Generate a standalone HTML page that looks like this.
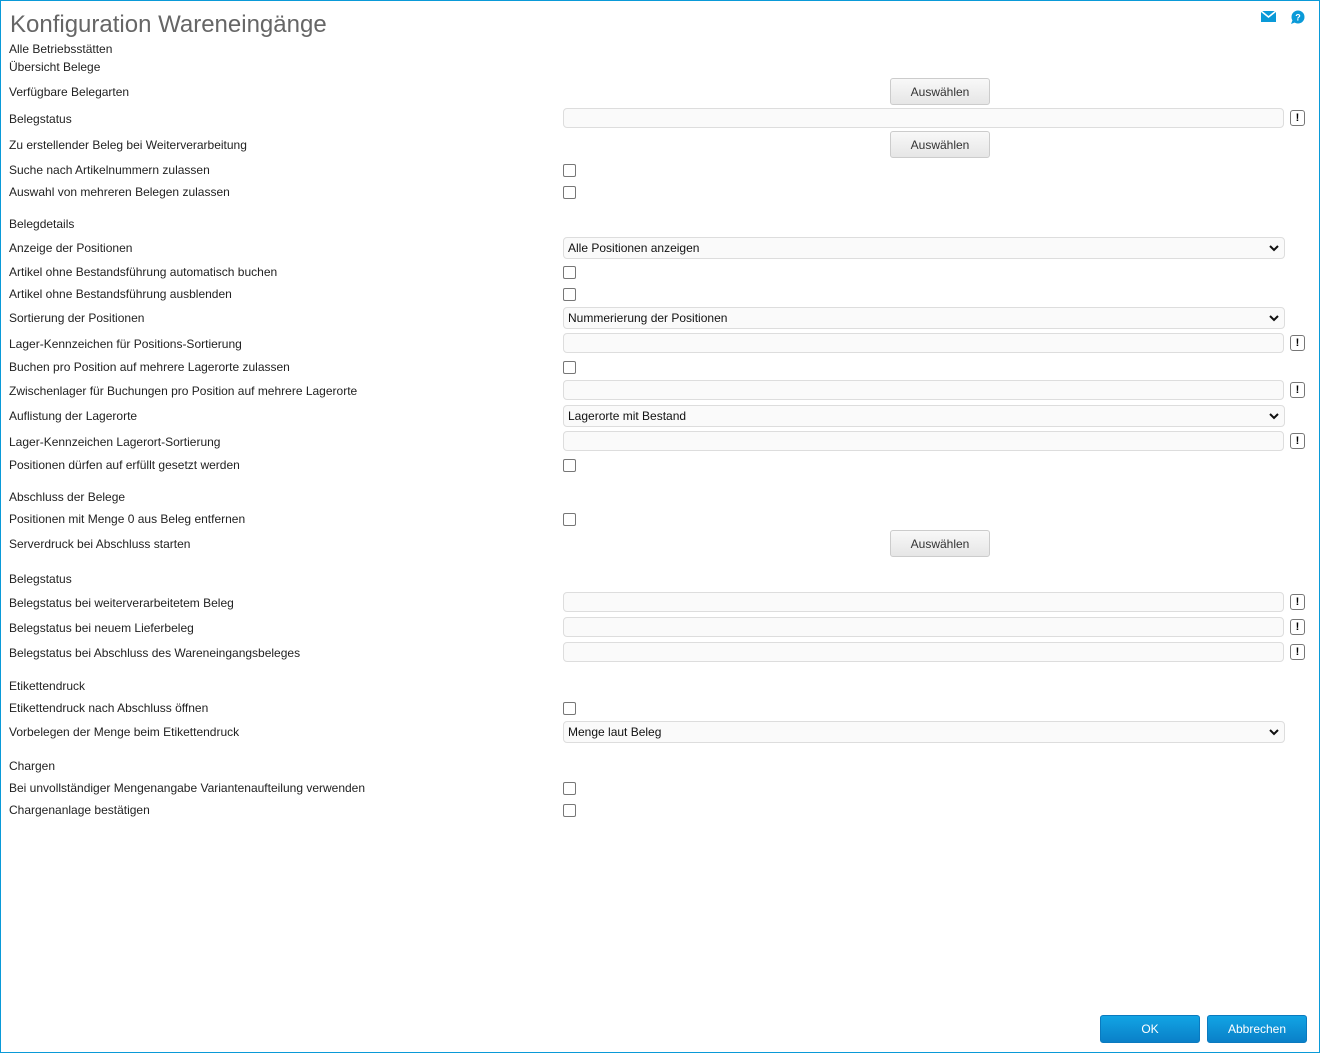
<!DOCTYPE html>
<html><head><meta charset="utf-8"><style>
*{box-sizing:border-box;margin:0;padding:0}
html,body{width:1320px;height:1053px;overflow:hidden;background:#fff}
body{font-family:"Liberation Sans",Arial,sans-serif;font-size:12px;color:#222;position:relative}
#frame{position:absolute;left:0;top:0;width:1320px;height:1053px;border:1px solid #0a9ad8}
.l{position:absolute;left:9px;line-height:14px;white-space:nowrap;margin-top:1px}
h1{position:absolute;left:10px;top:10px;font-size:24px;font-weight:normal;color:#666;line-height:30px}
.in{position:absolute;left:563px;width:721px;height:20px;border:1px solid #ddd;border-radius:4px;background:#fafafa}
.ex{position:absolute;left:1290px;width:15px;height:16px;border:1px solid #777;border-radius:3px;background:#fff;font-weight:bold;font-size:11px;text-align:center;line-height:14px;color:#000}
.sel{position:absolute;left:563px;width:722px;height:22px;border:1px solid #ddd;border-radius:4px;background:#fafafa;padding-left:4px;line-height:20px;color:#111}
.sel svg{position:absolute;right:5px;top:6px}
.cb{position:absolute;left:563px;width:13px;height:13px;border:1px solid #777;border-radius:2px;background:#fff}
.bt{position:absolute;left:890px;width:100px;height:27px;border:1px solid #ccc;border-radius:3px;background:linear-gradient(#f8f8f8,#e6e6e6);text-align:center;line-height:26px;color:#333}
.pb{position:absolute;top:1015px;width:100px;height:28px;border-radius:3px;background:linear-gradient(#12a4e4,#0a80c8);border:1px solid #0a7abf;color:#fff;text-align:center;line-height:26px}
</style></head><body>
<div id="frame"></div>
<h1>Konfiguration Wareneingänge</h1>
<svg style="position:absolute;left:1261px;top:11px" width="15" height="11" viewBox="0 0 15 11"><rect width="15" height="11" fill="#0a9ad8"/><path d="M0 0 L7.5 6 L15 0" fill="none" stroke="#fff" stroke-width="1.6"/></svg>
<svg style="position:absolute;left:1290px;top:10px" width="15" height="14" viewBox="0 0 15 14"><circle cx="8" cy="7" r="6.5" fill="#0a9ad8"/><path d="M1 14 L3 9 L6 12Z" fill="#0a9ad8"/><text x="8" y="10.5" font-size="9" font-weight="bold" fill="#fff" text-anchor="middle" font-family="Liberation Sans">?</text></svg>

<div class="l" style="top:41px">Alle Betriebsstätten</div>
<div class="l" style="top:59px">Übersicht Belege</div>
<div class="l" style="top:84px">Verfügbare Belegarten</div>
<div class="bt" style="top:78px">Auswählen</div>
<div class="l" style="top:111px">Belegstatus</div>
<div class="in" style="top:108px"></div><div class="ex" style="top:110px">!</div>
<div class="l" style="top:137px">Zu erstellender Beleg bei Weiterverarbeitung</div>
<div class="bt" style="top:131px">Auswählen</div>
<div class="l" style="top:162px">Suche nach Artikelnummern zulassen</div><div class="cb" style="top:164px"></div>
<div class="l" style="top:184px">Auswahl von mehreren Belegen zulassen</div><div class="cb" style="top:186px"></div>

<div class="l" style="top:216px">Belegdetails</div>
<div class="l" style="top:240px">Anzeige der Positionen</div>
<div class="sel" style="top:237px">Alle Positionen anzeigen<svg width="10" height="8" viewBox="0 0 10 8"><path d="M1 2 L5 6 L9 2" fill="none" stroke="#111" stroke-width="2"/></svg></div>
<div class="l" style="top:264px">Artikel ohne Bestandsführung automatisch buchen</div><div class="cb" style="top:266px"></div>
<div class="l" style="top:286px">Artikel ohne Bestandsführung ausblenden</div><div class="cb" style="top:288px"></div>
<div class="l" style="top:310px">Sortierung der Positionen</div>
<div class="sel" style="top:307px">Nummerierung der Positionen<svg width="10" height="8" viewBox="0 0 10 8"><path d="M1 2 L5 6 L9 2" fill="none" stroke="#111" stroke-width="2"/></svg></div>
<div class="l" style="top:336px">Lager-Kennzeichen für Positions-Sortierung</div>
<div class="in" style="top:333px"></div><div class="ex" style="top:335px">!</div>
<div class="l" style="top:359px">Buchen pro Position auf mehrere Lagerorte zulassen</div><div class="cb" style="top:361px"></div>
<div class="l" style="top:383px">Zwischenlager für Buchungen pro Position auf mehrere Lagerorte</div>
<div class="in" style="top:380px"></div><div class="ex" style="top:382px">!</div>
<div class="l" style="top:408px">Auflistung der Lagerorte</div>
<div class="sel" style="top:405px">Lagerorte mit Bestand<svg width="10" height="8" viewBox="0 0 10 8"><path d="M1 2 L5 6 L9 2" fill="none" stroke="#111" stroke-width="2"/></svg></div>
<div class="l" style="top:434px">Lager-Kennzeichen Lagerort-Sortierung</div>
<div class="in" style="top:431px"></div><div class="ex" style="top:433px">!</div>
<div class="l" style="top:457px">Positionen dürfen auf erfüllt gesetzt werden</div><div class="cb" style="top:459px"></div>

<div class="l" style="top:489px">Abschluss der Belege</div>
<div class="l" style="top:511px">Positionen mit Menge 0 aus Beleg entfernen</div><div class="cb" style="top:513px"></div>
<div class="l" style="top:536px">Serverdruck bei Abschluss starten</div>
<div class="bt" style="top:530px">Auswählen</div>

<div class="l" style="top:571px">Belegstatus</div>
<div class="l" style="top:595px">Belegstatus bei weiterverarbeitetem Beleg</div>
<div class="in" style="top:592px"></div><div class="ex" style="top:594px">!</div>
<div class="l" style="top:620px">Belegstatus bei neuem Lieferbeleg</div>
<div class="in" style="top:617px"></div><div class="ex" style="top:619px">!</div>
<div class="l" style="top:645px">Belegstatus bei Abschluss des Wareneingangsbeleges</div>
<div class="in" style="top:642px"></div><div class="ex" style="top:644px">!</div>

<div class="l" style="top:678px">Etikettendruck</div>
<div class="l" style="top:700px">Etikettendruck nach Abschluss öffnen</div><div class="cb" style="top:702px"></div>
<div class="l" style="top:724px">Vorbelegen der Menge beim Etikettendruck</div>
<div class="sel" style="top:721px">Menge laut Beleg<svg width="10" height="8" viewBox="0 0 10 8"><path d="M1 2 L5 6 L9 2" fill="none" stroke="#111" stroke-width="2"/></svg></div>

<div class="l" style="top:758px">Chargen</div>
<div class="l" style="top:780px">Bei unvollständiger Mengenangabe Variantenaufteilung verwenden</div><div class="cb" style="top:782px"></div>
<div class="l" style="top:802px">Chargenanlage bestätigen</div><div class="cb" style="top:804px"></div>

<div class="pb" style="left:1100px">OK</div>
<div class="pb" style="left:1207px">Abbrechen</div>
</body></html>
